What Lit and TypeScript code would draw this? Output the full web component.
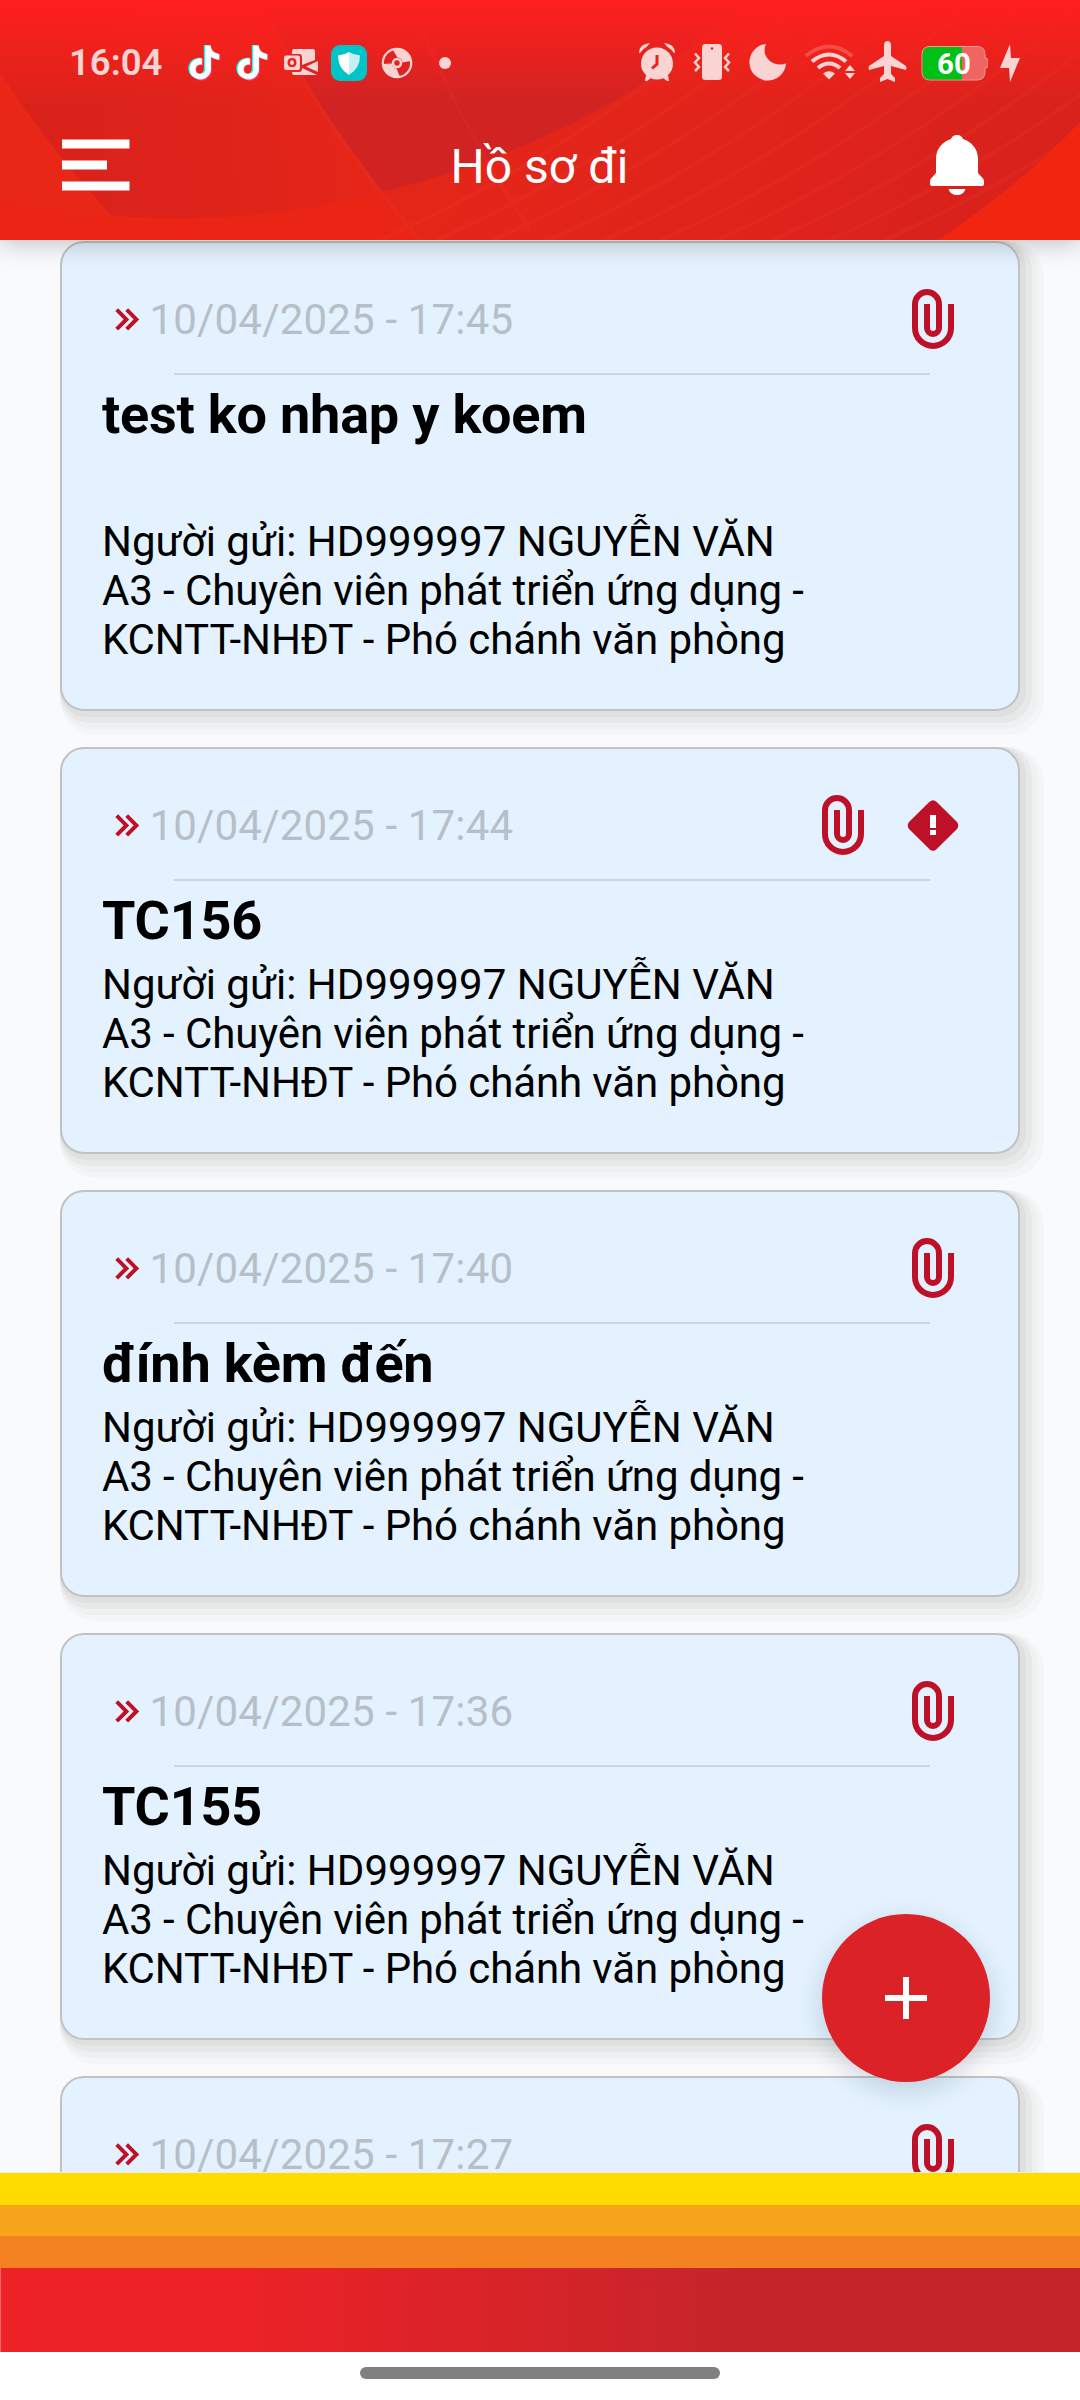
import { LitElement, html, css, svg } from "lit";
import { customElement, property } from "lit/decorators.js";

interface Doc {
  time: string;
  title?: string;
  urgent?: boolean;
  tall?: boolean;
}

const SENDER =
  "Người gửi: HD999997 NGUYỄN VĂN\nA3 - Chuyên viên phát triển ứng dụng -\nKCNTT-NHĐT - Phó chánh văn phòng";

const DOCS: Doc[] = [
  { time: "10/04/2025 - 17:45", title: "test ko nhap y koem", tall: true },
  { time: "10/04/2025 - 17:44", title: "TC156", urgent: true },
  { time: "10/04/2025 - 17:40", title: "đính kèm đến" },
  { time: "10/04/2025 - 17:36", title: "TC155" },
  { time: "10/04/2025 - 17:27" },
];

const NOTE =
  "M12.525.02c1.31-.02 2.61-.01 3.91-.02.08 1.53.63 3.09 1.75 4.17 1.12 1.11 2.7 1.62 4.24 1.79v4.03c-1.44-.05-2.89-.35-4.2-.97-.57-.26-1.1-.59-1.62-.93-.01 2.92.01 5.84-.02 8.75-.08 1.4-.54 2.79-1.35 3.94-1.31 1.92-3.58 3.17-5.91 3.21-1.43.08-2.86-.31-4.08-1.03-2.02-1.19-3.44-3.37-3.65-5.71-.02-.5-.03-1-.01-1.49.18-1.9 1.12-3.72 2.58-4.96 1.66-1.44 3.98-2.13 6.15-1.72.02 1.48-.04 2.96-.04 4.44-.99-.32-2.15-.23-3.02.37-.63.41-1.11 1.04-1.36 1.75-.21.51-.15 1.07-.14 1.61.24 1.64 1.82 3.02 3.5 2.87 1.12-.01 2.19-.66 2.77-1.61.19-.33.4-.67.41-1.06.1-1.79.06-3.57.07-5.36.01-4.03-.01-8.05.02-12.07z";

@customElement("status-bar")
export class StatusBar extends LitElement {
  static styles = css`
    :host {
      display: flex;
      align-items: center;
      height: 46px;
      padding: 40px 60px 0 69px;
      color: #fad3d3;
      fill: #fad3d3;
    }
    svg {
      display: block;
      flex: none;
    }
    .time {
      width: 118px;
      font-size: 36.5px;
      font-weight: 600;
      line-height: 46px;
      white-space: nowrap;
    }
    .left {
      display: flex;
      gap: 12px;
      flex: 1;
    }
    .right {
      display: flex;
      gap: 15px;
    }
    .wifi {
      margin-left: 2px;
    }
    .plane {
      margin-left: -3px;
    }
    .battery {
      display: grid;
      margin-left: -2px;
    }
    .battery > * {
      grid-area: 1 / 1;
    }
    .level {
      width: 60px;
      text-align: center;
      color: #fff;
      font-size: 29.5px;
      font-weight: 700;
      line-height: 46px;
      padding: 1px 0 0 3px;
    }
    .bolt {
      margin-left: -3px;
    }
  `;

  private note() {
    return html`<svg width="36" height="46" viewBox="0 0 36 46">
      <g transform="translate(.5 5.500) scale(1.42)">
        <path d=${NOTE} fill="#25f4ee" transform="translate(-1 -.4)"></path>
        <path d=${NOTE} fill="#fe2c55" transform="translate(.9 .8)"></path>
        <path d=${NOTE} fill="#fff"></path>
      </g>
    </svg>`;
  }

  render() {
    return html`
      <div class="time">16:04</div>
      <div class="left">
        ${this.note()} ${this.note()}
        <svg width="36" height="46" viewBox="283 40 36 46">
          <path d="M294 49h19q2 0 2 2v9l-13 5V57q0-3-3-3h-7v-3q0-2 2-2z"></path>
          <path d="M318 61v11l-12-5.500z"></path>
          <path d="M292 72h7q3 0 3-3v-1l15 7h-23q-2 0-2-3z"></path>
          <path
            fill-rule="evenodd"
            d="M286 55.500h12q2 0 2 2v10.500q0 2-2 2h-12q-2 0-2-2V57.500q0-2 2-2zm6 2.500c-3 0-4.500 2-4.500 4.700s1.500 4.500 4.500 4.500 4.500-1.800 4.500-4.500S295 58 292 58zm0 2.300c1.300 0 1.900 1 1.900 2.400s-.6 2.200-1.900 2.200-1.900-.9-1.900-2.200.6-2.400 1.900-2.400z"
          ></path>
        </svg>
        <svg width="36" height="46" viewBox="331 40 36 46">
          <rect x="331" y="45" width="36" height="36" rx="9" fill="#00c4c8"></rect>
          <path d="M349 52q-5 3-11 3.500 0 13 11 19.500z" fill="#fff"></path>
          <path d="M349 52q5 3 11 3.500 0 13-11 19.500z" fill="#c4f0f1"></path>
        </svg>
        <svg width="36" height="46" viewBox="379 40 36 46">
          <circle cx="397" cy="63" r="14.200" fill="none" stroke="#fad3d3" stroke-width="2.200"></circle>
          <path d="M383 64l9-.5a5.500 5.500 0 0 0 4.500 5L400 77a14 14 0 0 1-17-13z"></path>
          <path d="M393 50a14 14 0 0 1 18 11l-8.500 1.500a5.500 5.500 0 0 0-5-5z"></path>
          <circle cx="397" cy="63" r="4" fill="none" stroke="#fad3d3" stroke-width="2.600"></circle>
        </svg>
        <svg width="36" height="46" viewBox="427 40 36 46">
          <circle cx="445" cy="63" r="6"></circle>
        </svg>
      </div>
      <div class="right">
        <svg width="40" height="46" viewBox="637 40 40 46">
          <circle cx="657" cy="63.500" r="16"></circle>
          <path d="M639 53q0-9 11-10-2 3-5 5t-5 5zM675 53q0-9-11-10 2 3 5 5t5 5z"></path>
          <path d="M646 75l5 3-4 3h-2zM668 75l-5 3 4 3h2z"></path>
          <path d="M657 55v9l-5 4.500" fill="none" stroke="#e5231c" stroke-width="3"></path>
        </svg>
        <svg width="40" height="46" viewBox="692 40 40 46">
          <rect x="702" y="44" width="20" height="36" rx="3.500"></rect>
          <circle cx="712" cy="48.500" r="1.300" fill="#e5231c"></circle>
          <path
            d="M695 53.500l4 4.500-4 4.500 4 4.500-4 4M729 53.500l-4 4.500 4 4.500-4 4.500 4 4"
            fill="none"
            stroke="#fad3d3"
            stroke-width="2.500"
          ></path>
        </svg>
        <svg width="40" height="46" viewBox="747 40 40 46">
          <path d="M766 44A18.300 18.300 0 1 0 786 63.500C774 68 760 57 766 44z"></path>
        </svg>
        <svg class="wifi" width="52" height="46" viewBox="804 40 52 46">
          <g fill="none" stroke="#fad3d3" stroke-width="4">
            <path d="M806 56q23-19 46 0" opacity=".25"></path>
            <path d="M812 61.500q17-14 34 0"></path>
            <path d="M818 68q11-9 22 0"></path>
          </g>
          <path d="M829 79.500l-6-6q6-4.500 12 0z"></path>
          <path d="M850 65l5 6h-10zM850 79l5-6h-10z"></path>
        </svg>
        <svg class="plane" width="40" height="46" viewBox="868 40 40 46">
          <path
            d="M887.500 41c2.500 0 3.500 2 3.500 4.500V56l15 10q1 2 0 4l-15-4v8l4 4v4l-7.500-3-7.500 3v-4l4-4v-8l-15 4q-1-2 0-4l15-10V45.500c0-2.500 1-4.500 3.500-4.500z"
          ></path>
        </svg>
        <div class="battery">
          <svg width="67" height="46" viewBox="921 40 67 46">
            <path
              d="M930 46.500h47q8 0 8 8V58h1q2 .5 2 2.500v5q0 2-2 2.500h-1v4q0 8-8 8h-47q-8 0-8-8V54.500q0-8 8-8z"
              fill="#f06462"
              stroke="#f29a98"
            ></path>
            <path d="M930 47h32v32.500h-32q-7.500 0-7.500-7.500V54.500q0-7.500 7.500-7.500z" fill="#00c016"></path>
          </svg>
          <div class="level">60</div>
        </div>
        <svg class="bolt" width="20" height="46" viewBox="1000 40 20 46">
          <path d="M1010 44l-10 24h9l1 14 10-24h-9z"></path>
        </svg>
      </div>
    `;
  }
}

@customElement("app-header")
export class AppHeader extends LitElement {
  static styles = css`
    :host {
      display: grid;
      height: 240px;
      box-shadow: 0 3px 24px rgba(0, 0, 0, 0.24);
      position: relative;
      z-index: 2;
    }
    :host > * {
      grid-area: 1 / 1;
    }
    svg {
      display: block;
    }
    .bar {
      display: grid;
      grid-template-columns: 1fr auto 1fr;
      align-items: center;
      height: 60px;
      padding: 49px 96px 0 62px;
    }
    .front {
      display: flex;
      flex-direction: column;
      min-width: 0;
    }
    .title {
      color: #fff;
      font-size: 48px;
      line-height: 56px;
      margin-right: -33px;
      padding-top: 4px;
    }
    .bell {
      justify-self: end;
    }
  `;

  private stripes() {
    return Array.from({ length: 13 }, (_, i) => {
      const x = 330 + i * 56;
      return svg`<path d="M${x} 262Q${x + 250} 160 ${x + 440} -20"></path>`;
    });
  }

  render() {
    return html`
      <svg width="1080" height="240" viewBox="0 0 1080 240">
        <defs>
          <linearGradient id="top" x1="0" y1="0" x2="0" y2="1">
            <stop offset="0" stop-color="#ff1f1f"></stop>
            <stop offset=".5" stop-color="#ff201c" stop-opacity=".5"></stop>
            <stop offset="1" stop-color="#ff201c" stop-opacity="0"></stop>
          </linearGradient>
          <linearGradient id="glow" x1="80" y1="120" x2="370" y2="90" gradientUnits="userSpaceOnUse">
            <stop offset="0" stop-color="#da221b"></stop>
            <stop offset=".5" stop-color="#df231b"></stop>
            <stop offset="1" stop-color="#e62618"></stop>
          </linearGradient>
          <linearGradient id="right" x1="500" y1="60" x2="940" y2="240" gradientUnits="userSpaceOnUse">
            <stop offset="0" stop-color="#e42619"></stop>
            <stop offset=".55" stop-color="#e0231b"></stop>
            <stop offset="1" stop-color="#d9221c"></stop>
          </linearGradient>
        </defs>
        <rect width="430" height="240" fill="url(#glow)"></rect>
        <path d="M0 72Q60 165 135 240H0z" fill="#e92717"></path>
        <path d="M0 200Q200 240 382 192L421 240H0z" fill="#ea2515"></path>
        <path d="M260 0Q320 120 421 240H1080V0z" fill="#d02322"></path>
        <path d="M382 192Q600 140 750 0H1080V240H421z" fill="url(#right)"></path>
        <g fill="none" stroke="#f6483a" stroke-width="4" opacity=".12">
          ${this.stripes()}
          <path d="M412 0Q450 110 530 230"></path>
          <path d="M259 0Q319 120 420 240"></path>
        </g>
        <path d="M1080 122Q1020 185 938 240H1080z" fill="#f12611"></path>
        <rect width="1080" height="105" fill="url(#top)"></rect>
      </svg>
      <div class="front">
        <status-bar></status-bar>
        <div class="bar">
          <svg width="68" height="54" viewBox="0 0 68 54" fill="#fff">
            <path d="M0 1.500h67.500v9H0zM0 22.500h45v9H0zM0 43.500h67.500v9H0z"></path>
          </svg>
          <div class="title">Hồ sơ đi</div>
          <svg class="bell" width="54" height="60" viewBox="0 0 54 60" fill="#fff">
            <path
              d="M27 0c3 0 5 1.500 6 4 9 3 15 10 15 20v14l5 5.500q1 1 1 2.500v3q0 2-2 2H2q-2 0-2-2v-3q0-1.500 1-2.500L6 38V24C6 14 12 7 21 4c1-2.500 3-4 6-4zM18.500 54h17q-2 6-8.500 6t-8.500-6z"
            ></path>
          </svg>
        </div>
      </div>
    `;
  }
}

@customElement("doc-card")
export class DocCard extends LitElement {
  @property({ attribute: false }) doc!: Doc;

  static styles = css`
    :host {
      display: block;
      flex: none;
      box-sizing: border-box;
      min-height: 407px;
      border: 2px solid #c2c2c2;
      border-radius: 24px;
      background: #e3f2fe;
      box-shadow:
        3px 3px 0 3px #dfe1e0,
        6px 6px 0 6px #e7e9e8,
        9px 9px 0 9px #eef0f1,
        12px 12px 0 12px #f4f5f7;
      padding: 0 49px 45px 40px;
    }
    svg {
      display: block;
      flex: none;
    }
    .head {
      display: flex;
      align-items: center;
      height: 108px;
      padding: 22px 0 0 13px;
    }
    .date {
      flex: 1;
      margin-left: 9.5px;
      color: #b6bfc8;
      font-size: 42px;
      line-height: 49px;
      letter-spacing: 0.18px;
    }
    .icons {
      display: flex;
      gap: 18px;
    }
    .rule {
      height: 2px;
      margin: 0 39px 0 72px;
      background: #ced5de;
    }
    .title {
      margin-top: 8px;
      height: 63px;
      font-size: 54px;
      font-weight: 700;
      line-height: 63px;
      letter-spacing: -0.2px;
    }
    .title.tall {
      height: 126px;
    }
    .sender {
      margin-top: 8px;
      white-space: pre;
      font-size: 42px;
      line-height: 49px;
      letter-spacing: -0.1px;
    }
    .sender::first-line {
      letter-spacing: 0.03px;
    }
  `;

  render() {
    const { time, title, urgent, tall } = this.doc;
    return html`
      <div class="head">
        <svg width="25" height="23" viewBox="0 0 25 23">
          <path
            d="M1.700 1.700l9.700 9.700-9.700 9.700M11.700 1.700l9.700 9.700-9.700 9.700"
            fill="none"
            stroke="#be1128"
            stroke-width="4"
          ></path>
        </svg>
        <div class="date">${time}</div>
        <div class="icons">
          <svg width="72" height="72" viewBox="-15 -6 72 72">
            <path
              d="M39 15V39a18 18 0 0 1-36 0V15a12 12 0 0 1 24 0v24a6 6 0 0 1-12 0V15"
              fill="none"
              stroke="#be1128"
              stroke-width="6"
            ></path>
          </svg>
          ${urgent
            ? html`<svg width="72" height="72" viewBox="0 0 72 72">
                <path
                  d="M32.500 12.700q3.500-3 7 0L60 33q2.500 3.500 0 7L39.500 60.200q-3.500 3-7 0L12 40q-2.500-3.500 0-7z"
                  fill="#be1128"
                ></path>
                <path d="M33 26h6v13h-6zM33 41h6v5h-6z" fill="#fff"></path>
              </svg>`
            : ""}
        </div>
      </div>
      <div class="rule"></div>
      ${title
        ? html`<div class="title ${tall ? "tall" : ""}">${title}</div>
            <div class="sender">${SENDER}</div>`
        : ""}
    `;
  }
}

@customElement("app-root")
export class AppRoot extends LitElement {
  static styles = css`
    :host {
      display: flex;
      flex-direction: column;
      position: relative;
      width: 1080px;
      height: 2400px;
      overflow: hidden;
      background: #fff;
      color: #000;
      font-family: Roboto, "Liberation Sans", sans-serif;
    }
    .list {
      display: flex;
      flex-direction: column;
      gap: 36px;
      box-sizing: border-box;
      height: 1932px;
      padding: 1px 60px 0;
      overflow: hidden;
      background: #f8fafc;
    }
    .bands {
      display: grid;
      grid-template-rows: 32px 31px 32px 84px;
      border-top: 1px solid #f3eeda;
    }
    .yellow {
      background: #ffdc00;
    }
    .amber {
      background: #f9a51b;
    }
    .orange {
      background: #f58220;
    }
    .red {
      background: linear-gradient(90deg, #ec2227 0%, #ec2227 22%, #c5252a 68%, #c5252a 100%);
      border-left: 1px solid #f0686b;
    }
    .nav {
      display: flex;
      justify-content: center;
      padding-top: 15px;
    }
    .handle {
      width: 360px;
      height: 12px;
      border-radius: 6px;
      background: #808080;
    }
    .fab {
      position: absolute;
      left: 822px;
      top: 1914px;
      width: 168px;
      height: 168px;
      border-radius: 50%;
      background: #db2227;
      box-shadow: 0 8px 26px rgba(0, 20, 50, 0.16);
      display: grid;
      place-items: center;
    }
  `;

  render() {
    return html`
      <app-header></app-header>
      <div class="list">${DOCS.map((d) => html`<doc-card .doc=${d}></doc-card>`)}</div>
      <div class="bands">
        <div class="yellow"></div>
        <div class="amber"></div>
        <div class="orange"></div>
        <div class="red"></div>
      </div>
      <div class="nav"><div class="handle"></div></div>
      <div class="fab">
        <svg width="42" height="42" viewBox="0 0 42 42" fill="#fff">
          <path d="M18 0h6v18h18v6H24v18h-6V24H0v-6h18z"></path>
        </svg>
      </div>
    `;
  }
}
